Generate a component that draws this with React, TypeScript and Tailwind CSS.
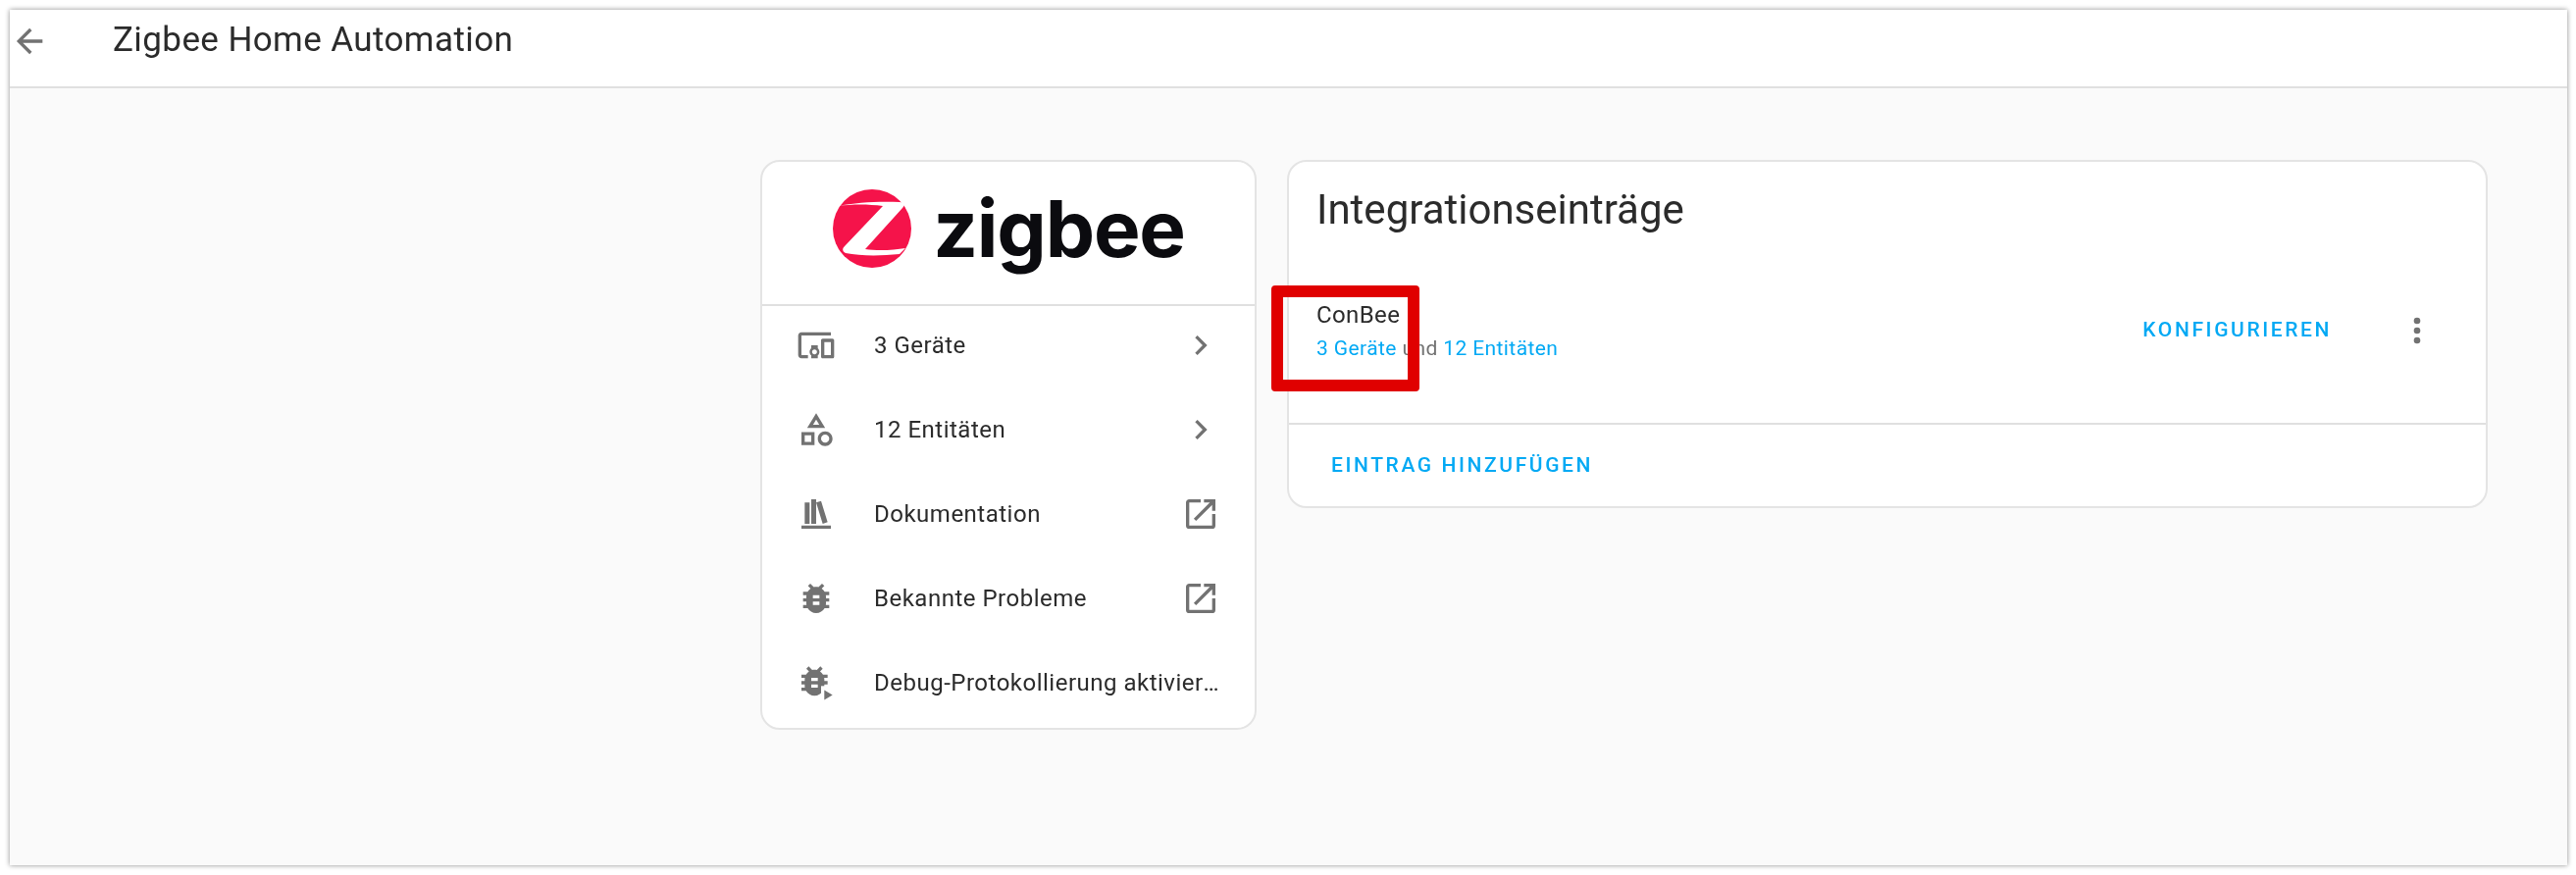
const ICON = {
  back: "M20,11V13H8L13.5,18.5L12.08,19.92L4.16,12L12.08,4.08L13.5,5.5L8,11H20Z",
  devices:
    "M3 6H21V4H3C1.9 4 1 4.9 1 6V18C1 19.1 1.9 20 3 20H7V18H3V6M13 12H9V13.78C8.39 14.33 8 15.11 8 16C8 16.89 8.39 17.67 9 18.22V20H13V18.22C13.61 17.67 14 16.88 14 16S13.61 14.33 13 13.78V12M11 17.5C10.17 17.5 9.5 16.83 9.5 16S10.17 14.5 11 14.5 12.5 15.17 12.5 16 11.83 17.5 11 17.5M22 8H16C15.5 8 15 8.5 15 9V19C15 19.5 15.5 20 16 20H22C22.5 20 23 19.5 23 19V9C23 8.5 22.5 8 22 8M21 18H17V10H21V18Z",
  shapes:
    "M11,13.5V21.5H3V13.5H11M9,15.5H5V19.5H9V15.5M12,2L17.5,11H6.5L12,2M12,5.86L10.08,9H13.92L12,5.86M17.5,13C20,13 22,15 22,17.5C22,20 20,22 17.5,22C15,22 13,20 13,17.5C13,15 15,13 17.5,13M17.5,15A2.5,2.5 0 0,0 15,17.5A2.5,2.5 0 0,0 17.5,20A2.5,2.5 0 0,0 20,17.5A2.5,2.5 0 0,0 17.5,15Z",
  books: "M9 3V18H12V3H9M12 5L16 18L19 17L15 4L12 5M5 5V18H8V5H5M3 19V21H21V19H3Z",
  bug: "M14,12H10V10H14M14,16H10V14H14M20,8H17.19C16.74,7.22 16.12,6.55 15.37,6.04L17,4.41L15.59,3L13.42,5.17C12.96,5.06 12.5,5 12,5C11.5,5 11.04,5.06 10.59,5.17L8.41,3L7,4.41L8.62,6.04C7.88,6.55 7.26,7.22 6.81,8H4V10H6.09C6.04,10.33 6,10.66 6,11V12H4V14H6V15C6,15.34 6.04,15.67 6.09,16H4V18H6.81C7.85,19.79 9.78,21 12,21C14.22,21 16.15,19.79 17.19,18H20V16H17.91C17.96,15.67 18,15.34 18,15V14H20V12H18V11C18,10.66 17.96,10.33 17.91,10H20V8Z",
  chevron: "M8.59,16.58L13.17,12L8.59,7.41L10,6L16,12L10,18L8.59,16.58Z",
  open: "M14,3V5H17.59L7.76,14.83L9.17,16.24L19,6.41V10H21V3M19,19H5V5H12V3H5C3.89,3 3,3.9 3,5V19A2,2 0 0,0 5,21H19A2,2 0 0,0 21,19V12H19V19Z",
  dots: "M12,16A2,2 0 0,1 14,18A2,2 0 0,1 12,20A2,2 0 0,1 10,18A2,2 0 0,1 12,16M12,10A2,2 0 0,1 14,12A2,2 0 0,1 12,14A2,2 0 0,1 10,12A2,2 0 0,1 12,10M12,4A2,2 0 0,1 14,6A2,2 0 0,1 12,8A2,2 0 0,1 10,6A2,2 0 0,1 12,4Z",
};

function Icon({ d }: { d: string }) {
  return (
    <svg viewBox="0 0 24 24" className="h-10 w-10 shrink-0 fill-[#727272]">
      <path d={d} />
    </svg>
  );
}

function BugPlay() {
  return (
    <svg viewBox="0 0 24 24" className="h-10 w-10 shrink-0 fill-[#727272]">
      <path d={ICON.bug} transform="translate(-1 -1)" />
      <path d="M15 14h8v9h-8z" fill="#ffffff" />
      <path d="M17 16.5v6l5-3z" />
    </svg>
  );
}

function ZigbeeMark() {
  return (
    <svg viewBox="0 0 80 80" className="h-20 w-20 shrink-0">
      <circle cx="40" cy="40" r="40" fill="#f5134a" />
      <path d="M5 17C24 13 50 12 68 13C72 13 74 16 71 19L33 61C46 63 62 62 74 60C72 62 70 64 68 66C48 68 28 68 13 65C10 64 9 61 12 58L51 17C36 15 20 15 5 17Z" fill="#ffffff" />
    </svg>
  );
}

function MenuRow({ icon, label, end }: { icon: React.ReactNode; label: string; end?: string }) {
  return (
    <div className="flex h-[86px] items-center pl-[35px] pr-[35px]">
      {icon}
      <span className="ml-[39px] min-w-0 flex-1 truncate text-[24px] tracking-[0.5px] text-[#2b2b2b]">{label}</span>
      {end && <Icon d={end} />}
    </div>
  );
}

export default function App() {
  return (
    <div className="h-[892px] bg-white pl-[10px] pr-[9px] pt-[10px] font-['Roboto',sans-serif] blur-[0.7px]">
      <div className="flex h-[872px] flex-col bg-[#fafafa] shadow-[0_0_5px_rgba(0,0,0,0.45)]">
        <header className="flex h-[80px] shrink-0 items-center border-b-2 border-[#e0e0e0] bg-white pb-[15px]">
          <Icon d={ICON.back} />
          <h1 className="ml-[65px] text-[35px] tracking-[0.4px] text-[#2b2b2b]">Zigbee Home Automation</h1>
        </header>

        <main className="flex items-start gap-[31px] pl-[765px] pt-[73px]">
          <section className="w-[506px] rounded-[20px] border-2 border-[#e4e4e4] bg-white pb-[3px]">
            <div className="mb-[-3px] flex h-[147px] items-center justify-center gap-[22px] border-b-2 border-[#e0e0e0] pb-[9px] pl-[1px]">
              <ZigbeeMark />
              <span className="font-['Inter',sans-serif] text-[80px] leading-none font-bold tracking-[-1.2px] text-[#0b0b0f]">zigbee</span>
            </div>
            <MenuRow icon={<Icon d={ICON.devices} />} label="3 Geräte" end={ICON.chevron} />
            <MenuRow icon={<Icon d={ICON.shapes} />} label="12 Entitäten" end={ICON.chevron} />
            <MenuRow icon={<Icon d={ICON.books} />} label="Dokumentation" end={ICON.open} />
            <MenuRow icon={<Icon d={ICON.bug} />} label="Bekannte Probleme" end={ICON.open} />
            <MenuRow icon={<BugPlay />} label="Debug-Protokollierung aktivieren" />
          </section>

          <section className="w-[1224px] rounded-[20px] border-2 border-[#e4e4e4] bg-white">
            <h2 className="pl-[28px] pt-[21px] pb-[1px] text-[42px] leading-[56px] text-[#2b2b2b]">Integrationseinträge</h2>
            <div className="flex h-[188px] items-center pl-[28px] pr-[50px]">
              <div className="relative flex-1">
                <div className="text-[24px] leading-[36px] tracking-[0.4px] text-[#2b2b2b]">ConBee</div>
                <div className="text-[21px] leading-[32px] tracking-[0.4px] text-[#727272]">
                  <span className="text-[#03a9f4]">3 Geräte</span> und <span className="text-[#03a9f4]">12 Entitäten</span>
                </div>
                <div className="absolute left-[-46px] top-[-12px] h-[108px] w-[151px] rounded-[4px] border-[12px] border-[#e00000]" />
              </div>
              <span className="mr-[67px] text-[21px] font-medium tracking-[2.6px] text-[#03a9f4]">KONFIGURIEREN</span>
              <Icon d={ICON.dots} />
            </div>
            <div className="flex h-[85px] items-center border-t-2 border-[#e0e0e0] pl-[43px]">
              <span className="text-[21px] font-medium tracking-[2.6px] text-[#03a9f4]">EINTRAG HINZUFÜGEN</span>
            </div>
          </section>
        </main>
      </div>
    </div>
  );
}
